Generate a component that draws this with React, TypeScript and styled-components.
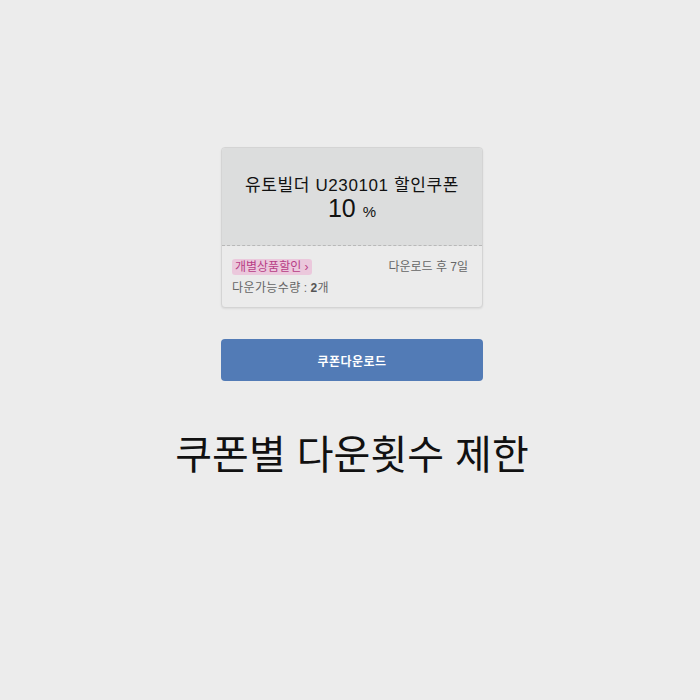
import * as React from "react";
import styled, { createGlobalStyle } from "styled-components";

const Global = createGlobalStyle`
  html, body {
    margin: 0;
    padding: 0;
    background: #ececec;
    font-family: "Liberation Sans", "Noto Sans CJK KR", sans-serif;
  }
`;

const Page = styled.div`
  width: 700px;
  height: 700px;
  display: flex;
  flex-direction: column;
  align-items: center;
  padding: 147px 0 0 4px;
  box-sizing: border-box;
`;

const Coupon = styled.div`
  width: 262px;
  border: 1px solid #d4d4d4;
  border-radius: 4px;
  background: #ebebeb;
  box-shadow: 0 1px 2px rgba(0, 0, 0, 0.08);
  overflow: hidden;
  box-sizing: border-box;
`;

const CouponHead = styled.div`
  height: 98px;
  background: #dcdddd;
  border-bottom: 1px dashed #b8b8b8;
  display: flex;
  flex-direction: column;
  align-items: center;
  justify-content: center;
  padding-top: 6px;
  box-sizing: border-box;
  color: #111;
`;

const Title = styled.div`
  font-size: 17px;
  line-height: 20px;
  letter-spacing: 0.6px;
`;

const Rate = styled.div`
  font-size: 25px;
  line-height: 25px;
  span {
    font-size: 15px;
  }
`;

const CouponBody = styled.div`
  padding: 13px 14px 11px 10px;
  font-size: 12px;
  color: #666;
`;

const Row = styled.div`
  display: flex;
  justify-content: space-between;
  align-items: flex-start;
`;

const Tag = styled.span`
  display: inline-block;
  background: #ebc8dc;
  color: #b83d86;
  border-radius: 3px;
  padding: 1px 3px;
  line-height: 14px;
`;

const Period = styled.span`
  color: #666;
  line-height: 16px;
`;

const Count = styled.div`
  margin-top: 5px;
  line-height: 16px;
  letter-spacing: 0.4px;
  b {
    color: #555;
  }
`;

const Colon = styled.span`
  margin: 0 3px;
`;

const DownloadButton = styled.button`
  margin-top: 31px;
  width: 262px;
  height: 42px;
  border: none;
  border-radius: 4px;
  background: #527bb6;
  color: #fff;
  font-family: inherit;
  font-size: 12px;
  font-weight: bold;
  letter-spacing: 0.5px;
  cursor: pointer;
`;

const Heading = styled.h1`
  margin: 50px 0 0;
  font-size: 40px;
  font-weight: normal;
  color: #111;
  line-height: 48px;
`;

export default function App() {
  return (
    <Page>
      <Global />
      <Coupon>
        <CouponHead>
          <Title>유토빌더 U230101 할인쿠폰</Title>
          <Rate>
            10 <span>%</span>
          </Rate>
        </CouponHead>
        <CouponBody>
          <Row>
            <Tag>개별상품할인 ›</Tag>
            <Period>다운로드 후 7일</Period>
          </Row>
          <Count>
            다운가능수량<Colon>:</Colon><b>2</b>개
          </Count>
        </CouponBody>
      </Coupon>
      <DownloadButton>쿠폰다운로드</DownloadButton>
      <Heading>쿠폰별 다운횟수 제한</Heading>
    </Page>
  );
}
